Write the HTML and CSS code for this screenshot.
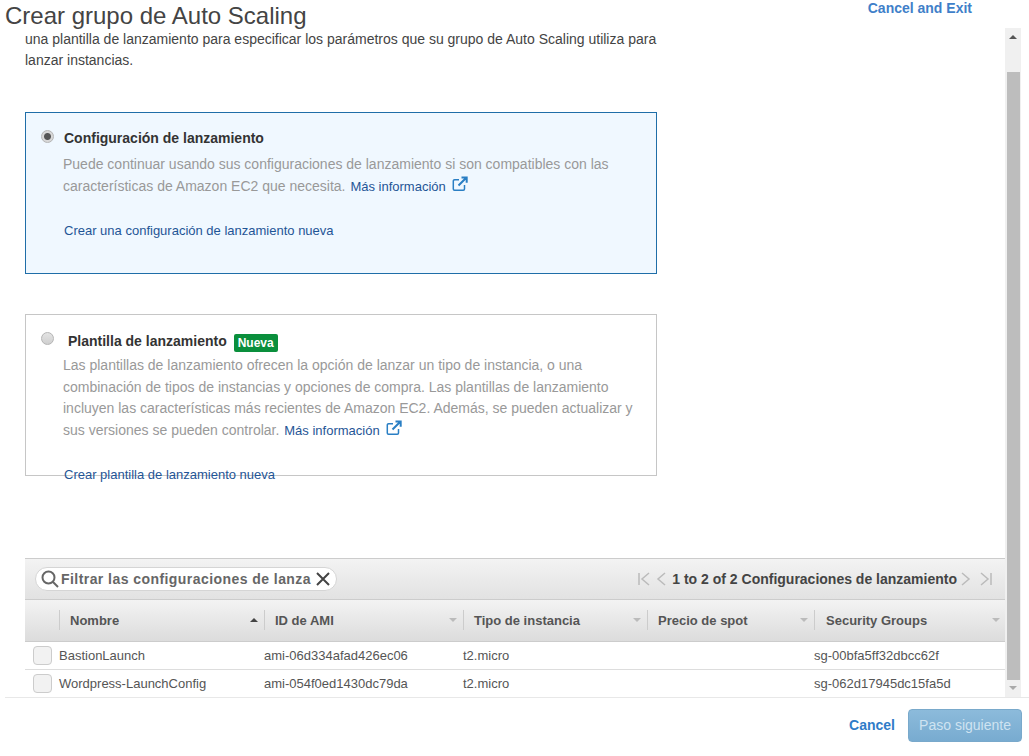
FILE: index.html
```html
<!DOCTYPE html>
<html lang="es">
<head>
  <meta charset="UTF-8" />
  <title>Crear grupo de Auto Scaling</title>
  <link rel="stylesheet" href="styles.css">
</head>
<body>

<!-- Header -->
<div class="header">
  <h1 class="title">Crear grupo de Auto Scaling</h1>
  <a class="exit-link">Cancel and Exit</a>
</div>

<div class="main">
  <div class="content">
    <p class="intro">una plantilla de lanzamiento para especificar los parámetros que su grupo de Auto Scaling utiliza para lanzar instancias.</p>

    <!-- Options -->
    <div class="option option-selected">
      <div class="option-head">
        <span class="radio radio-on"></span>
        <span class="option-title">Configuración de lanzamiento</span>
      </div>
      <p class="option-text">Puede continuar usando sus configuraciones de lanzamiento si son compatibles con las características de Amazon EC2 que necesita. <a class="link more">Más información</a><svg class="ext" viewBox="0 0 16 16"><path class="ext-box" d="M12.5 9v4a1.2 1.2 0 0 1-1.2 1.2H2.5a1.2 1.2 0 0 1-1.2-1.2V5a1.2 1.2 0 0 1 1.2-1.2H7" /><path class="ext-arrow" d="M6.5 9.5 14 2M9.5 1.5h5.2v5.2" /></svg></p>
      <a class="link create create-first">Crear una configuración de lanzamiento nueva</a>
    </div>

    <div class="option option-plain">
      <div class="option-head">
        <span class="radio"></span>
        <span class="option-title option-title-wide">Plantilla de lanzamiento</span>
        <span class="badge">Nueva</span>
      </div>
      <p class="option-text option-text-tight">Las plantillas de lanzamiento ofrecen la opción de lanzar un tipo de instancia, o una combinación de tipos de instancias y opciones de compra. Las plantillas de lanzamiento incluyen las características más recientes de Amazon EC2. Además, se pueden actualizar y sus versiones se pueden controlar. <a class="link more">Más información</a><svg class="ext" viewBox="0 0 16 16"><path class="ext-box" d="M12.5 9v4a1.2 1.2 0 0 1-1.2 1.2H2.5a1.2 1.2 0 0 1-1.2-1.2V5a1.2 1.2 0 0 1 1.2-1.2H7" /><path class="ext-arrow" d="M6.5 9.5 14 2M9.5 1.5h5.2v5.2" /></svg></p>
      <a class="link create create-second">Crear plantilla de lanzamiento nueva</a>
    </div>

    <!-- Table -->
    <div class="table">
      <div class="toolbar">
        <div class="search">
          <svg class="search-icon" viewBox="0 0 18 18"><circle cx="7.5" cy="7.5" r="6" /><path d="M12 12 17 17" /></svg>
          <span class="search-text">Filtrar las configuraciones de lanza</span>
          <svg class="clear-icon" viewBox="0 0 14 14"><path d="M1 1 13 13M13 1 1 13" /></svg>
        </div>
        <div class="pager">
          <svg class="pager-icon pager-first" viewBox="0 0 12 14"><path d="M1 1v12M11 1 4 7l7 6" /></svg>
          <svg class="pager-icon" viewBox="0 0 12 14"><path d="M10 1 3 7l7 6" /></svg>
          <span class="pager-text">1 to 2 of 2 Configuraciones de lanzamiento</span>
          <svg class="pager-icon" viewBox="0 0 12 14"><path d="M2 1l7 6-7 6" /></svg>
          <svg class="pager-icon pager-last" viewBox="0 0 12 14"><path d="M1 1l7 6-7 6M11 1v12" /></svg>
        </div>
      </div>

      <div class="row row-head">
        <div></div>
        <div class="th"><span>Nombre</span><i class="sort sort-up"></i></div>
        <div class="th"><span>ID de AMI</span><i class="sort"></i></div>
        <div class="th"><span>Tipo de instancia</span><i class="sort"></i></div>
        <div class="th"><span>Precio de spot</span><i class="sort"></i></div>
        <div class="th th-last"><span>Security Groups</span><i class="sort"></i></div>
      </div>

      <div class="row row-body">
        <div class="check-cell"><span class="check"></span></div>
        <div>BastionLaunch</div>
        <div>ami-06d334afad426ec06</div>
        <div>t2.micro</div>
        <div></div>
        <div>sg-00bfa5ff32dbcc62f</div>
      </div>
      <div class="row row-body">
        <div class="check-cell"><span class="check"></span></div>
        <div>Wordpress-LaunchConfig</div>
        <div>ami-054f0ed1430dc79da</div>
        <div>t2.micro</div>
        <div></div>
        <div>sg-062d17945dc15fa5d</div>
      </div>
    </div>
  </div>

  <div class="scrollbar">
    <div class="arrow arrow-up"></div>
    <div class="thumb"></div>
    <div class="arrow arrow-down"></div>
  </div>
</div>

<!-- Footer -->
<div class="footer">
  <a class="cancel">Cancel</a>
  <button class="next" disabled>Paso siguiente</button>
</div>

</body>
</html>
```

FILE: styles.css
```css
html, body {
  height: 100%;
}

body {
  margin: 0;
  background: #fff;
  color: #444;
  font-family: 'Liberation Sans', Arial, sans-serif;
  font-size: 14px;
  overflow: hidden;
}

/* Header */
.header {
  display: flex;
  justify-content: space-between;
  align-items: flex-start;
  height: 28px;
  padding: 0 57px 0 5px;
}

.title {
  margin: 0;
  padding-top: 2px;
  font-size: 24px;
  font-weight: normal;
  line-height: 27px;
  color: #444;
}

.exit-link {
  font-size: 14px;
  font-weight: bold;
  line-height: 16px;
  color: #3f7fc9;
}

/* Main area */
.main {
  display: flex;
  height: 669px;
  padding-right: 8px;
  border-bottom: 1px solid #e8e8e8;
  margin-left: 5px;
}

.content {
  flex: 1;
  padding-left: 20px;
  overflow: hidden;
}

.intro {
  width: 640px;
  margin: 0;
  padding-top: 1px;
  line-height: 21px;
  color: #444;
}

.option {
  box-sizing: border-box;
  width: 632px;
  height: 162px;
  padding: 15px 15px 0;
  border: 1px solid #c6c6c6;
}

.option-selected {
  margin-top: 41px;
  background: #f0f8ff;
  border-color: #1f6ea8;
}

.option-plain {
  margin-top: 40px;
  padding-top: 15px;
}

.option-head {
  display: flex;
  align-items: center;
  height: 20px;
}

.radio {
  box-sizing: border-box;
  width: 13px;
  height: 13px;
  margin-top: -4px;
  border: 1px solid #b5b5b5;
  border-radius: 50%;
  background: linear-gradient(#e4e4e4, #cfcfcf);
}

.radio-on {
  background: radial-gradient(circle, #555 0 3px, #d8d8d8 4px);
}

.option-title {
  margin-left: 10px;
  font-weight: bold;
  color: #333;
}

.option-title-wide {
  margin-left: 14px;
  margin-top: 2px;
}

.badge {
  margin-left: 7px;
  margin-top: 6px;
  padding: 0 4px;
  height: 18px;
  line-height: 18px;
  font-size: 12px;
  font-weight: bold;
  color: #fff;
  background: #0a8f3c;
  border-radius: 2px;
}

.option-text {
  width: 570px;
  margin: 5px 0 0 22px;
  line-height: 22px;
  color: #999;
}

.option-text-tight {
  margin-top: 5px;
  line-height: 21.6px;
}

.link {
  font-size: 13px;
  color: #1f5596;
}

.more {
  margin-left: 1px;
}

.ext {
  width: 16px;
  height: 16px;
  margin-left: 6px;
  vertical-align: -1px;
  fill: none;
  stroke: #2a7fc4;
}

.ext-box {
  stroke-width: 1.5;
}

.ext-arrow {
  stroke-width: 2;
}

.create {
  display: block;
  margin-left: 23px;
  line-height: 20px;
}

.create-first {
  margin-top: 23px;
}

.create-second {
  margin-top: 24px;
}

/* Table */
.table {
  width: 980px;
  margin-top: 82px;
}

.toolbar {
  display: flex;
  justify-content: space-between;
  align-items: center;
  box-sizing: border-box;
  height: 42px;
  padding: 0 13px 0 10px;
  background: linear-gradient(#f3f3f3, #e2e2e2);
  border-top: 1px solid #ccc;
  border-bottom: 1px solid #ccc;
}

.search {
  display: flex;
  align-items: center;
  box-sizing: border-box;
  width: 302px;
  height: 24px;
  padding: 0 6px 0 5px;
  background: #fff;
  border: 1px solid #d5d5d5;
  border-radius: 12px;
}

.search-icon {
  flex: none;
  width: 18px;
  height: 18px;
  fill: none;
  stroke: #666;
  stroke-width: 2;
}

.search-text {
  flex: 1;
  margin-left: 2px;
  font-weight: bold;
  letter-spacing: 0.44px;
  color: #666;
  white-space: nowrap;
  overflow: hidden;
}

.clear-icon {
  flex: none;
  width: 14px;
  height: 14px;
  margin-left: 4px;
  fill: none;
  stroke: #444;
  stroke-width: 2;
}

.pager {
  display: flex;
  align-items: center;
}

.pager-icon {
  width: 12px;
  height: 14px;
  fill: none;
  stroke: #bbb;
  stroke-width: 1.5;
}

.pager-first {
  margin-right: 5px;
}

.pager-last {
  margin-left: 8px;
}

.pager-text {
  margin: 0 3px 0 5px;
  font-weight: bold;
  color: #444;
}

.row {
  display: grid;
  grid-template-columns: 34px 205px 199px 184px 167px 191px;
  align-items: center;
}

.row-head {
  height: 42px;
  padding-bottom: 1px;
  background: linear-gradient(#f3f3f3, #dcdcdc);
  border-bottom: 1px solid #ccc;
  box-sizing: border-box;
}

.th {
  display: flex;
  justify-content: space-between;
  align-items: center;
  box-sizing: border-box;
  height: 20px;
  padding: 0 6px 0 10px;
  border-left: 1px solid #ccc;
  font-size: 13px;
  font-weight: bold;
  color: #555;
}

.th-last {
  padding-left: 11px;
  padding-right: 5px;
}

.sort {
  width: 0;
  height: 0;
  border-left: 4px solid transparent;
  border-right: 4px solid transparent;
  border-top: 4px solid #bbb;
}

.sort-up {
  border-top: 0;
  border-bottom: 4px solid #444;
}

.row-body {
  box-sizing: border-box;
  height: 28px;
  border-bottom: 1px solid #ddd;
  font-size: 13px;
  color: #555;
}

.check-cell {
  display: flex;
  padding-left: 8px;
}

.check {
  box-sizing: border-box;
  width: 19px;
  height: 19px;
  background: #f2f2f2;
  border: 1px solid #ccc;
  border-radius: 4px;
}

/* Scrollbar */
.scrollbar {
  display: flex;
  flex-direction: column;
  align-items: center;
  flex: none;
  width: 16px;
  background: #f0f0f0;
}

.arrow {
  flex: none;
  width: 0;
  height: 0;
  border-left: 4px solid transparent;
  border-right: 4px solid transparent;
}

.arrow-up {
  margin: 7px 0 0;
  border-bottom: 4px solid #555;
}

.arrow-down {
  margin: 6px 0 7px;
  border-top: 4px solid #aaa;
}

.thumb {
  flex: 1;
  width: 13px;
  margin-top: 33px;
  background: #bdbdbd;
}

/* Footer */
.footer {
  display: flex;
  justify-content: flex-end;
  align-items: center;
  gap: 13px;
  height: 54px;
  padding: 0 7px 0 0;
}

.cancel {
  font-weight: bold;
  color: #2f7cc8;
}

.next {
  width: 114px;
  height: 33px;
  padding: 0;
  font-family: 'Liberation Sans', Arial, sans-serif;
  font-size: 14px;
  color: #cfe3f1;
  background: linear-gradient(#8cbbdb, #78abd0);
  border: 1px solid #79a9cb;
  border-radius: 4px;
}
```
